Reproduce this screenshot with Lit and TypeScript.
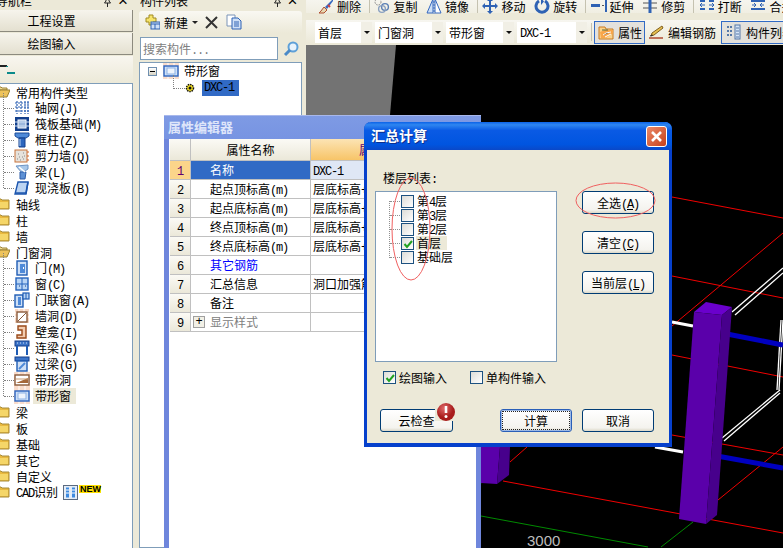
import { LitElement, css, html, svg } from "lit";
import { customElement } from "lit/decorators.js";

const shared = css`
  * { box-sizing: border-box; }
  :host { font: 12px "Noto Sans CJK SC", sans-serif; color: #000; }
  .lat { font: 12px "Liberation Mono", monospace; letter-spacing: -1.2px; }
  svg { display: block; flex: none; }
`;

// latin runs go in a 6px-per-char font, like the bitmap font in the app
const t = (s: string) =>
  s.split(/([\x20-\x7e]+)/).map((p, i) => (i % 2 ? html`<span class="lat">${p}</span>` : p));

const ic = (body: unknown, w = 16, h = 16) =>
  html`<svg width=${w} height=${h} viewBox="0 0 ${w} ${h}">${body}</svg>`;

const folderOpen = svg`<path d="M1 3h5l1 1h5v2H5L2 13H1z" fill="#f0dc9a" stroke="#9a8030"/><path d="M5 6h10l-3 7H2z" fill="#eec35a" stroke="#9a8030"/>`;
const folderShut = svg`<path d="M1 3h5l1 1h7v9H1z" fill="#e9b93f" stroke="#a58a3a"/><path d="M2 6h11v6H2z" fill="#f5d668"/>`;

const treeIcons: Record<string, unknown> = {
  grid: svg`<path d="M1 3h14M1 7h14M1 11h14M3 1v13M7 1v13M11 1v13M14 1v13" stroke="#2f62b4" stroke-width="1.2" stroke-dasharray="2 1" fill="none"/>`,
  raft: svg`<rect x="1" y="1" width="14" height="14" fill="#123f8c"/><rect x="4" y="4" width="8" height="8" fill="#9db8de" stroke="#fff"/><path d="M1 6h14M1 10h14" stroke="#cfe0f5"/>`,
  column: svg`<path d="M1 1h14v3l-3 2H4L1 4z" fill="#4f8ad8" stroke="#1c4d9a"/><path d="M5 6h6v9H5z" fill="#2c66be" stroke="#123f8c"/><path d="M6 7v7" stroke="#bcd6f4"/>`,
  wall: svg`<rect x="1" y="2" width="12" height="12" fill="#e6e2dc" stroke="#c8733a"/><path d="M3 11h1M6 12h1M9 11h1M5 9h1M8 9h1M10 8h1M4 6h1M9 5h1" stroke="#888"/><path d="M13 4h2M13 8h2M13 12h2" stroke="#d0642a"/>`,
  beam: svg`<path d="M2 2l12-1v4L8 9z" fill="#a8c8ea" stroke="#6d94c4"/><path d="M6 8h6l-1 7H6z" fill="#5c90d4" stroke="#2c5ca8"/><path d="M5 3l6 5" stroke="#fff" stroke-width="1.5"/>`,
  slab: svg`<path d="M4 2h10l-2 12H1z" fill="#bcd4f2" stroke="#1c55ae" stroke-width="1.4"/><path d="M2 13h10l2-11" stroke="#1c55ae" stroke-width="1.6" fill="none"/>`,
  door: svg`<rect x="3" y="1" width="10" height="14" fill="#cfe0f6" stroke="#1f5cb4" stroke-width="1.4"/><rect x="6" y="4" width="5" height="9" fill="#4f8ad8"/><rect x="9" y="7" width="1" height="2" fill="#fff"/>`,
  win: svg`<rect x="2" y="2" width="12" height="12" fill="#b9d5f5" stroke="#2563bc" stroke-width="1.4"/><path d="M8 2v12M2 8h12" stroke="#2563bc"/><path d="M5 10h1M11 10h1" stroke="#12408a"/>`,
  doorwin: svg`<rect x="1" y="3" width="8" height="12" fill="#cfe0f6" stroke="#1f5cb4" stroke-width="1.4"/><rect x="4" y="5" width="3" height="8" fill="#4f8ad8"/><rect x="9" y="1" width="6" height="6" fill="#b9d5f5" stroke="#1f5cb4" stroke-width="1.2"/><path d="M12 1v6" stroke="#1f5cb4"/>`,
  hole: svg`<rect x="1" y="1" width="14" height="14" fill="#f6d6c2"/><path d="M1 5h14M1 9h14M5 1v14M10 1v14" stroke="#fff"/><rect x="3" y="4" width="10" height="10" fill="#fff" stroke="#8a5a3a" stroke-width="1.4"/><path d="M4 13l8-8" stroke="#8a5a3a"/>`,
  niche: svg`<path d="M4 2h8v12H3v-3h5V6H4z" fill="#f3cdb0" stroke="#9a4a1a" stroke-width="1.4"/>`,
  lintelA: svg`<rect x="1" y="1" width="14" height="5" fill="#3c74c8" stroke="#143f8c"/><path d="M3 3h1M6 3h1M9 3h1M12 3h1" stroke="#cfe0f6"/><path d="M3 6v9M13 6v9" stroke="#1f5cb4" stroke-width="2"/>`,
  lintelB: svg`<rect x="1" y="1" width="14" height="4" fill="#3c74c8" stroke="#143f8c"/><rect x="3" y="5" width="10" height="10" fill="#cfe0f6" stroke="#1f5cb4" stroke-width="1.4"/><path d="M5 13l6-6" stroke="#4f8ad8" stroke-width="2"/>`,
  strip: svg`<rect x="0" y="0" width="16" height="16" fill="#f9dccb"/><path d="M0 4h16M0 12h16M5 0v16M11 0v16" stroke="#fff"/><rect x="1" y="3" width="14" height="10" fill="#fff" stroke="#8a5a3a" stroke-width="1.4"/><path d="M2 11l12-5v5z" fill="#a5683a"/><path d="M2 7h12" stroke="#c99a70"/>`,
  stripWin: svg`<rect x="0" y="0" width="16" height="16" fill="#f9dccb"/><path d="M0 4h16M0 12h16M5 0v16M11 0v16" stroke="#fff"/><rect x="1" y="3" width="14" height="10" fill="#cfe0f6" stroke="#2c64c0" stroke-width="1.4"/><rect x="4" y="5" width="8" height="6" fill="#eef4fc" stroke="#8db2e6"/>`,
};

const toolIcons: Record<string, unknown> = {
  erase: svg`<path d="M15 1L7 9l2 2 6-8z" fill="#3568c0"/><path d="M6 9l3 3-3 3H1l2-2z" fill="#e6d7b0" stroke="#b05030"/><path d="M10 7l2 2" stroke="#d04040" stroke-width="2"/>`,
  copy: svg`<circle cx="4" cy="4" r="3" fill="none" stroke="#888" stroke-dasharray="1.5 1"/><circle cx="11" cy="9" r="3.4" fill="none" stroke="#5a7fb4" stroke-width="1.4"/><circle cx="8" cy="11" r="3.4" fill="none" stroke="#8aa0c0" stroke-width="1.4"/>`,
  mirror: svg`<path d="M7 1v14H1z" fill="#cfe0f6" stroke="#3568c0"/><path d="M9 1v14h6z" fill="#fff" stroke="#3568c0"/><path d="M8 0v16" stroke="#3568c0" stroke-dasharray="2 1"/>`,
  move: svg`<path d="M8 0l3 3H9v4h4V5l3 3-3 3V9H9v4h2l-3 3-3-3h2V9H3v2L0 8l3-3v2h4V3H5z" fill="#2f62b4"/>`,
  rotate: svg`<path d="M11 3a6 6 0 1 1-6 0" fill="none" stroke="#2f62b4" stroke-width="3"/><path d="M7 0v7l3-3.500z" fill="#2f62b4"/>`,
  extend: svg`<rect x="0" y="6" width="9" height="3" fill="#2f62b4"/><path d="M11 7.500h2" stroke="#555"/><path d="M15 2v12" stroke="#2f62b4" stroke-width="2"/>`,
  trim: svg`<path d="M1 5h14M1 10h14" stroke="#555"/><path d="M8 1v14" stroke="#2f62b4" stroke-width="3"/>`,
  cut: svg`<path d="M1 3h5M10 3h5M1 11h5M10 11h5" stroke="#2f62b4" stroke-width="2"/><path d="M6 7H2M10 7h4" stroke="#2f62b4"/><path d="M3 5L1 7l2 2M13 5l2 2-2 2" stroke="#2f62b4" fill="none"/>`,
  merge: svg`<path d="M1 3h14M1 11h14" stroke="#2f62b4" stroke-width="2"/><path d="M2 7h4M10 7h4" stroke="#2f62b4"/><path d="M4 5l2 2-2 2M12 5l-2 2 2 2" stroke="#2f62b4" fill="none"/>`,
  attr: svg`<path d="M1 3h6l1 2h7v10H1z" fill="#fbd28a" stroke="#c97a20"/><path d="M2 8l5-2h8v3l-7 5H3z" fill="#f8a64a"/><path d="M5 11l3-2 5-1M7 13l6-3" stroke="#fff"/><path d="M4 6h6" stroke="#5a6a3a"/>`,
  rebar: svg`<path d="M14 2l1 2-9 7-3 1 1-3z" fill="#e8c050" stroke="#806020"/><path d="M1 14h14" stroke="#b04a30" stroke-width="1.5"/><path d="M2 12l3-1" stroke="#333"/>`,
  list: svg`<rect x="10" y="1" width="5" height="14" fill="#d6e4f6" stroke="#5678a8"/><path d="M11 4h3M11 7h3M11 10h3M11 13h3" stroke="#5678a8"/><path d="M2 3h5M2 7h5M2 11h5" stroke="#5678a8" stroke-width="2" stroke-dasharray="2 1"/>`,
  plus: svg`<path d="M5 1h4v3h3v4H9v3H5V8H2V4h3z" fill="#f6e46a" stroke="#a08a20"/><rect x="7" y="8" width="9" height="7" fill="#cfe0f6" stroke="#2f62b4"/><path d="M7 10h9M11 10v5" stroke="#2f62b4"/>`,
  del: svg`<path d="M2 2l11 11M13 2L2 13" stroke="#333" stroke-width="2"/>`,
  clone: svg`<path d="M1 1h8v11H1z" fill="#fff" stroke="#7a94b8"/><path d="M6 4h6l3 3v8H6z" fill="#cfe0f6" stroke="#2f62b4"/><path d="M8 8h5M8 10h5M8 12h5" stroke="#2f62b4"/>`,
  search: svg`<circle cx="10" cy="6" r="4.500" fill="#e8f3fc" stroke="#5ea0d8" stroke-width="2"/><path d="M7 9l-5 5" stroke="#4a8ac8" stroke-width="3"/>`,
  gear: svg`<circle cx="5" cy="5" r="3.500" fill="#f4e020" stroke="#111" stroke-width="1.500" stroke-dasharray="1.500 0.800"/><circle cx="5" cy="5" r="1.500" fill="#111"/>`,
};

const pin = svg`<path d="M3 0h5M4 0v4L2.500 6h6L7 4V0M5.500 6v4" fill="none" stroke="#222"/>`;

const titleBar = (name: string) => html`
  <div class="title">
    <span>${name}</span>
    <span class="pin">${ic(pin, 11, 10)}</span>
    <span class="close">×</span>
  </div>
`;

const titleCss = css`
  .title { height: 7px; overflow: hidden; display: flex; align-items: flex-end; position: relative; }
  .title span:first-child { flex: 1; line-height: 12px; white-space: nowrap; }
  .pin { margin-bottom: 0; }
  .close { font: 17px/12px "Liberation Sans", sans-serif; width: 19px; text-align: center; }
`;

type NavItem = { label: string; icon?: string; kids?: { label: string; icon: string; on?: boolean }[]; open?: boolean };

const navItems: NavItem[] = [
  {
    label: "常用构件类型",
    open: true,
    kids: [
      { label: "轴网(J)", icon: "grid" },
      { label: "筏板基础(M)", icon: "raft" },
      { label: "框柱(Z)", icon: "column" },
      { label: "剪力墙(Q)", icon: "wall" },
      { label: "梁(L)", icon: "beam" },
      { label: "现浇板(B)", icon: "slab" },
    ],
  },
  { label: "轴线" },
  { label: "柱" },
  { label: "墙" },
  {
    label: "门窗洞",
    open: true,
    kids: [
      { label: "门(M)", icon: "door" },
      { label: "窗(C)", icon: "win" },
      { label: "门联窗(A)", icon: "doorwin" },
      { label: "墙洞(D)", icon: "hole" },
      { label: "壁龛(I)", icon: "niche" },
      { label: "连梁(G)", icon: "lintelA" },
      { label: "过梁(G)", icon: "lintelB" },
      { label: "带形洞", icon: "strip" },
      { label: "带形窗", icon: "stripWin", on: true },
    ],
  },
  { label: "梁" },
  { label: "板" },
  { label: "基础" },
  { label: "其它" },
  { label: "自定义" },
];

@customElement("nav-panel")
class NavPanel extends LitElement {
  static styles = [
    shared,
    titleCss,
    css`
      :host { display: block; width: 139px; height: 548px; background: #ece9d8; margin-right: 0; }
      .title { margin-left: -4px; width: 137px; }
      .title .close { width: 20px; margin-right: 0; }
      .stack { margin-top: 3px; width: 133px; }
      .big {
        height: 22px;
        padding-right: 29px;
        display: flex;
        align-items: center;
        justify-content: center;
        background: linear-gradient(#f6f4ec, #e4e0d0);
        border-right: 1px solid #8c8a7e;
        border-bottom: 1px solid #8c8a7e;
        margin-bottom: 1px;
      }
      .tools {
        width: 133px;
        height: 27px;
        background: linear-gradient(#f8f6ef, #ece9d8);
        padding-top: 9px;
      }
      .tree {
        width: 133px;
        height: 466px;
        padding-top: 0;
        background: #fff;
        border-top: 1px solid #7f9db9;
        border-right: 1px solid #7f9db9;
        overflow: hidden;
      }
      .row { display: flex; align-items: center; height: 16px; white-space: nowrap; }
      .group > svg { margin-left: -5px; margin-right: 6px; }
      .kids { position: relative; }
      .kids::before {
        content: "";
        position: absolute;
        left: 3px;
        top: -7px;
        bottom: 8px;
        border-left: 1px dotted #808080;
      }
      .kid { padding-left: 14px; position: relative; }
      .kid::before {
        content: "";
        position: absolute;
        left: 4px;
        width: 10px;
        top: 8px;
        border-top: 1px dotted #808080;
      }
      .kid span.lbl { margin-left: 3px; padding: 0 2px 0 2px; height: 16px; line-height: 16px; }
      .kid .on { background: #ece9d8; width: 43px; }
      .cad-ic { margin-left: 5px; margin-right: 1px; }
      .new {
        font: bold 9px/8px "Liberation Sans", sans-serif;
        background: #ffe000;
        padding: 0 1px;
        width: 22px;
        height: 8px;
        align-self: flex-start;
        margin-top: 1px;
      }
    `,
  ];

  render() {
    return html`
      ${titleBar("导航栏")}
      <div class="stack">
        <div class="big">工程设置</div>
        <div class="big">绘图输入</div>
      </div>
      <div class="tools">
        ${ic(svg`<path d="M-1 1h8" stroke="#222" stroke-width="2"/><path d="M7 8h8" stroke="#0a8a8a" stroke-width="2"/><path d="M7 1v1" stroke="#0a8a8a" stroke-width="2"/>`)}
      </div>
      <div class="tree">
        ${navItems.map(
          (g) => html`
            <div class="row group">${ic(g.open ? folderOpen : folderShut, 15, 16)}<span>${t(g.label)}</span></div>
            ${g.kids
              ? html`<div class="kids">
                  ${g.kids.map(
                    (k) => html`<div class="row kid">
                      ${ic(treeIcons[k.icon])}
                      <span class="lbl ${k.on ? "on" : ""}">${t(k.label)}</span>
                    </div>`,
                  )}
                </div>`
              : ""}
          `,
        )}
        <div class="row group">
          ${ic(folderShut, 15, 16)}<span>${t("CAD识别")}</span>
          <span class="cad-ic">${ic(svg`<rect x="0.500" y="0.500" width="14" height="14" fill="#e4ecf6" stroke="#5a6a80"/><path d="M3 2.500h3v10H3zM9 2.500h3v10H9z" fill="#3d8ae0"/><path d="M3 5h3M3 8h3M9 5h3M9 8h3" stroke="#fff"/>`, 15, 15)}</span>
          <span class="new">NEW</span>
        </div>
      </div>
    `;
  }
}

@customElement("list-panel")
class ListPanel extends LitElement {
  static styles = [
    shared,
    titleCss,
    css`
      :host { display: block; width: 163px; height: 548px; background: #ece9d8; }
      .title { margin-left: 1px; width: 162px; }
      .tools {
        margin-top: 4px;
        height: 22px;
        display: flex;
        align-items: center;
        background: linear-gradient(#f9f8f2, #ece9d8);
        padding-left: 5px;
        border-radius: 3px 3px 0 0;
      }
      .tools .txt { margin-left: 4px; width: 24px; }
      .arrow { width: 0; height: 0; border: 3px solid transparent; border-top: 3px solid #222; border-bottom: 0; margin: 0 6px 0 4px; }
      .tools .del { margin-right: 7px; }
      .search { margin-top: 4px; height: 23px; display: flex; align-items: center; padding-left: 1px; }
      .box {
        width: 138px;
        height: 23px;
        border: 1px solid #7f9db9;
        background: #fff;
        color: #808080;
        padding: 0 2px;
        line-height: 21px;
      }
      .go { margin-left: 5px; }
      .tree {
        margin-top: 2px;
        height: 486px;
        background: #fff;
        border: 1px solid #7f9db9;
        padding: 1px 0 0 8px;
      }
      .row { display: flex; align-items: center; height: 16px; white-space: nowrap; position: relative; }
      .minus {
        width: 9px;
        height: 9px;
        border: 1px solid #6f8fb0;
        background: linear-gradient(#fff, #d8d4c4);
        position: relative;
        margin-right: 6px;
      }
      .minus::after { content: ""; position: absolute; left: 1px; right: 1px; top: 3px; border-top: 1px solid #000; }
      .row .name { margin-left: 5px; line-height: 14px; }
      .child { padding-left: 37px; margin-top: 2px; }
      .child::before {
        content: "";
        position: absolute;
        left: 25px;
        top: -5px;
        width: 11px;
        height: 13px;
        border-left: 1px dotted #808080;
        border-bottom: 1px dotted #808080;
      }
      .sel {
        margin-left: 6px;
        width: 37px;
        height: 16px;
        line-height: 16px;
        padding-left: 2px;
        background: #316ac5;
      }
    `,
  ];

  render() {
    return html`
      ${titleBar("构件列表")}
      <div class="tools">
        ${ic(toolIcons.plus)}
        <span class="txt">新建</span>
        <span class="arrow"></span>
        <span class="del">${ic(toolIcons.del, 15, 15)}</span>
        ${ic(toolIcons.clone)}
      </div>
      <div class="search">
        <div class="box">${t("搜索构件...")}</div>
        <span class="go">${ic(toolIcons.search)}</span>
      </div>
      <div class="tree">
        <div class="row" style="height:14px">
          <span class="minus"></span>
          ${ic(treeIcons.stripWin)}
          <span class="name">带形窗</span>
        </div>
        <div class="row child">
          ${ic(toolIcons.gear, 11, 11)}
          <span class="sel lat">DXC-1</span>
        </div>
      </div>
    `;
  }
}

const row1 = [
  ["erase", "删除", true],
  ["copy", "复制", false],
  ["mirror", "镜像", true],
  ["move", "移动", false],
  ["rotate", "旋转", true],
  ["extend", "延伸", false],
  ["trim", "修剪", true],
  ["cut", "打断", false],
  ["merge", "合并", false],
] as [string, string, boolean][];

const combos = [
  ["首层", 57],
  ["门窗洞", 68],
  ["带形窗", 68],
  ["DXC-1", 70],
] as [string, number][];

@customElement("tool-bars")
class ToolBars extends LitElement {
  static styles = [
    shared,
    css`
      :host { display: block; height: 45px; background: #ece9d8; overflow: hidden; }
      .row1 {
        height: 13px;
        display: flex;
        align-items: flex-end;
        gap: 8.7px;
        padding-left: 12px;
        background: linear-gradient(#f6f5ee, #f0eee2);
        white-space: nowrap;
      }
      .item { display: flex; align-items: flex-end; gap: 3px; line-height: 13px; height: 13px; flex: none; }
      .item svg { margin-bottom: -1px; }
      .sep { width: 1px; height: 13px; background: #c5c2b0; margin: 0 -4px 0 -1px; flex: none; }
      .row2 {
        margin-top: 7px;
        height: 24px;
        display: flex;
        align-items: center;
        padding-left: 9px;
        background: linear-gradient(#f7f6f0, #ece9d8);
        white-space: nowrap;
      }
      .combo {
        height: 21px;
        margin-right: 3px;
        background: #fff;
        display: flex;
        align-items: center;
        padding-left: 3px;
        flex: none;
      }
      .combo .val { flex: 1; }
      .combo .drop {
        width: 11px;
        height: 21px;
        background: #f1efe5;
        position: relative;
      }
      .combo .drop::after {
        content: "";
        position: absolute;
        left: 3px;
        top: 9px;
        border: 3px solid transparent;
        border-top: 3px solid #111;
        border-bottom: 0;
      }
      .rule { width: 1px; height: 18px; background: #c5c2b0; margin: 0 2px 0 1px; flex: none; }
      .btn {
        height: 23px;
        border: 1px solid #316ac5;
        background: #e3e1dc;
        display: flex;
        align-items: center;
        gap: 4px;
        padding-left: 3px;
        flex: none;
      }
      .plain { display: flex; align-items: center; gap: 4px; margin: 0 4px 0 3px; flex: none; }
      .wide { gap: 5px; margin-left: 1px; }
    `,
  ];

  render() {
    return html`
      <div class="row1">
        ${row1.map(
          ([icon, label, sep]) => html`
            <div class="item">${ic(toolIcons[icon])}<span>${label}</span></div>
            ${sep ? html`<span class="sep"></span>` : ""}
          `,
        )}
      </div>
      <div class="row2">
        ${combos.map(
          ([label, w]) => html`
            <div class="combo" style="width:${w}px">
              <span class="val">${t(label)}</span><span class="drop"></span>
            </div>
          `,
        )}
        <span class="rule"></span>
        <div class="btn" style="width:51px">${ic(toolIcons.attr)}<span>属性</span></div>
        <div class="plain">${ic(toolIcons.rebar)}<span>编辑钢筋</span></div>
        <div class="btn wide" style="width:80px">${ic(toolIcons.list)}<span>构件列表</span></div>
      </div>
    `;
  }
}

const redLines = [
  [672, 197, 783, 218],
  [672, 276, 783, 298],
  [672, 355, 783, 377],
  [672, 435, 783, 455],
  [672, 326, 783, 233],
  [718, 500, 783, 447],
  [503, 481, 783, 533],
  [510, 462, 527, 447],
];
const greenLines = [
  [481, 516, 648, 547],
  [661, 547, 693, 522],
  [481, 483, 485, 481],
];
const whiteLines = [
  [732, 312, 783, 268],
  [735, 315, 783, 273],
  [722, 438, 780, 390],
  [724, 441, 780, 393],
  [783, 320, 779, 390],
  [781, 320, 777, 390],
];

@customElement("cad-view")
class CadView extends LitElement {
  static styles = [
    shared,
    css`
      :host { display: block; height: 503px; background: #000; overflow: hidden; }
      text { font: 15px "Liberation Sans", sans-serif; fill: #bdbdbd; }
    `,
  ];

  render() {
    const seg = (list: number[][], color: string, w: number) =>
      list.map(
        ([a, b, c, d]) =>
          svg`<line x1=${a} y1=${b} x2=${c} y2=${d} stroke=${color} stroke-width=${w} />`,
      );
    return html`
      <svg width="477" height="503" viewBox="306 45 477 503">
        <path d="M306 45h90l-6 70h-84z" fill="#737373" />
        ${seg(redLines, "#f00000", 1)} ${seg(greenLines, "#008a00", 1)} ${seg(whiteLines, "#fff", 1.3)}
        ${seg([[672, 322, 693, 326], [655, 447, 683, 452]], "#fff", 3)}
        ${seg([[727, 334, 783, 345], [717, 456, 783, 468]], "#0000c0", 5)}
        <path d="M481 447v36l16 1 3-37z" fill="#5a00aa" />
        <path d="M500 447h10l-1 28-12 9z" fill="#47008c" />
        <path d="M694 312l12-10 26 5-10 8z" fill="#6a00cc" />
        <path d="M694 312l-15 207 27 5 16-209z" fill="#5a00aa" />
        <path d="M722 315l10-8-15 208-11 9z" fill="#47008c" />
        <text x="527" y="546">3000</text>
      </svg>
    `;
  }
}

const propRows = [
  ["名称", "DXC-1"],
  ["起点顶标高(m)", "层底标高+洞口高度"],
  ["起点底标高(m)", "层底标高+洞口高度"],
  ["终点顶标高(m)", "层底标高+洞口高度"],
  ["终点底标高(m)", "层底标高+洞口高度"],
  ["其它钢筋", ""],
  ["汇总信息", "洞口加强筋"],
  ["备注", ""],
  ["显示样式", ""],
];

@customElement("prop-editor")
class PropEditor extends LitElement {
  static styles = [
    shared,
    css`
      :host {
        position: absolute;
        left: 164px;
        top: 115px;
        width: 317px;
        height: 433px;
        background: #fff;
        border-left: 5px solid #6f86dc;
        border-right: 5px solid #6f86dc;
      }
      .cap {
        height: 24px;
        margin: 0 -5px;
        padding-left: 4px;
        border-top: 1px solid #a8b8ec;
        background: linear-gradient(#7e9ae4, #7794e2);
        color: #dfe6fa;
        font-weight: bold;
        font-size: 13px;
        line-height: 22px;
      }
      .grid { display: grid; grid-template-columns: 21px 120px 165px; margin-left: 1px; white-space: nowrap; }
      .grid > div { height: 19px; border-bottom: 1px solid #c0c0c0; border-right: 1px solid #c0c0c0; line-height: 18px; overflow: hidden; }
      .grid .head {
        height: 22px;
        line-height: 21px;
        background: linear-gradient(#fbfaf5, #ebe8d9);
        text-align: center;
      }
      .grid .head.hot { background: linear-gradient(#fce4b4, #f7c468); text-align: left; padding-left: 48px; color: #600070; }
      .num { background: linear-gradient(#fbfaf5, #ebe8d9); text-align: center; }
      .num.hot { background: #fbd58a; color: #600070; }
      .name { padding-left: 19px; }
      .name.sel { background: #316ac5; color: #fff; }
      .name.link { color: #0000ff; }
      .name.dim { color: #808080; padding-left: 2px; display: flex; align-items: center; gap: 5px; }
      .val { padding-left: 2px; }
      .val.sel { background: #dfe7f5; }
      .plus {
        width: 12px;
        height: 12px;
        border: 1px solid #a0a0a0;
        background: #f2f0e6;
        color: #000;
        font: 12px/10px "Liberation Mono", monospace;
        text-align: center;
      }
    `,
  ];

  render() {
    return html`
      <div class="cap">属性编辑器</div>
      <div class="grid">
        <div class="head"></div>
        <div class="head">属性名称</div>
        <div class="head hot">属性值</div>
        ${propRows.map(([name, val], i) => {
          const cls = i === 0 ? "sel" : i === 5 ? "link" : i === 8 ? "dim" : "";
          return html`
            <div class="num ${i === 0 ? "hot" : ""}"><span class="lat">${i + 1}</span></div>
            <div class="name ${cls}">
              ${i === 8 ? html`<span class="plus">+</span>` : ""}<span>${t(name)}</span>
            </div>
            <div class="val ${i === 0 ? "sel" : ""}">${t(val)}</div>
          `;
        })}
      </div>
    `;
  }
}

const floors: [string, boolean][] = [
  ["第4层", false],
  ["第3层", false],
  ["第2层", false],
  ["首层", true],
  ["基础层", false],
];

const tick = svg`<path d="M2.500 6l2.500 3 5-6" fill="none" stroke="#21a121" stroke-width="2"/>`;

const check = (on: boolean) =>
  html`<span class="check">${on ? ic(tick, 11, 11) : ""}</span>`;

@customElement("sum-dialog")
class SumDialog extends LitElement {
  static styles = [
    shared,
    css`
      :host {
        position: absolute;
        left: 364px;
        top: 122px;
        width: 308px;
        height: 325px;
        background: #ece9d8;
        border: solid #0640cc;
        border-width: 0 3px 4px 3px;
        border-radius: 7px 7px 0 0;
      }
      .cap {
        height: 28px;
        margin: 0 -3px;
        border-radius: 7px 7px 0 0;
        background: linear-gradient(#0a62e8 0%, #2f86f0 10%, #0a5ae4 30%, #0055e0 80%, #0a48c8 100%);
        color: #fff;
        font-weight: bold;
        font-size: 14px;
        line-height: 27px;
        padding-left: 7px;
        text-shadow: 1px 1px #0a2f90;
        display: flex;
        justify-content: space-between;
      }
      .x {
        margin: 4px 5px 0 0;
        width: 21px;
        height: 21px;
        border: 1px solid #fff;
        border-radius: 3px;
        background: linear-gradient(135deg, #ea8a6a, #c8401a);
      }
      .top { display: flex; padding-left: 8px; }
      .label { margin: 20px 0 5px 8px; height: 16px; line-height: 16px; }
      .listbox {
        width: 182px;
        height: 171px;
        border: 1px solid #7f9db9;
        background: #fff;
        padding: 2px 0 0 25px;
        position: relative;
      }
      .listbox::before {
        content: "";
        position: absolute;
        left: 13px;
        top: 9px;
        height: 57px;
        width: 3px;
        border-left: 1px dotted #909090;
      }
      .floor { display: flex; align-items: center; height: 14px; position: relative; }
      .floor::before { content: ""; position: absolute; left: -11px; width: 10px; top: 7px; border-top: 1px dotted #909090; }
      .floor .nm { margin-left: 2px; padding: 0 1px; height: 14px; line-height: 14px; }
      .floor .nm.on { background: #ece9d8; width: 31px; }
      .check {
        display: block;
        width: 13px;
        height: 13px;
        flex: none;
        border: 1px solid #1c5180;
        background: linear-gradient(135deg, #dcdcd7, #fff);
      }
      .side { display: flex; flex-direction: column; gap: 17px; margin: 41px 0 0 25px; }
      button {
        width: 72px;
        height: 23px;
        padding: 0;
        font: inherit;
        color: #000;
        border: 1px solid #003c74;
        border-radius: 3px;
        background: linear-gradient(#fff, #f4f3ee 85%, #dcd8c8);
      }
      .opts { display: flex; align-items: center; height: 16px; margin: 7px 0 0 16px; }
      .opts .check { margin-right: 3px; }
      .opts .check.gap { margin-left: 23px; }
      .foot { display: flex; margin: 24px 0 0 13px; }
      .cloud { position: relative; margin-right: 47px; }
      .cloud button { width: 73px; }
      .alert { position: absolute; left: 55px; top: -7px; background: #ece9d8; width: 20px; height: 19px; }
      .ok { margin-right: 10px; border-color: #2a5fb8; box-shadow: inset 0 0 0 1px #9cb8e4; outline: 1px dotted #222; outline-offset: -3px; }
      .marks { position: absolute; left: -3px; top: 0; pointer-events: none; }
    `,
  ];

  render() {
    return html`
      <div class="cap">
        <span>汇总计算</span>
        <div class="x">
          ${ic(svg`<path d="M5 5l9 9M14 5l-9 9" stroke="#fff" stroke-width="2.600"/>`, 19, 19)}
        </div>
      </div>
      <div class="top">
        <div>
          <div class="label" style="margin-left:8px">${t("楼层列表:")}</div>
          <div class="listbox">
            ${floors.map(
              ([name, on]) => html`
                <div class="floor">${check(on)}<span class="nm ${on ? "on" : ""}">${t(name)}</span></div>
              `,
            )}
          </div>
        </div>
        <div class="side">
          <button>全选<span class="lat">(<u>A</u>)</span></button>
          <button>清空<span class="lat">(<u>C</u>)</span></button>
          <button>当前层<span class="lat">(<u>L</u>)</span></button>
        </div>
      </div>
      <div class="opts">
        ${check(true)}<span>绘图输入</span>
        <span class="check gap"></span><span>单构件输入</span>
      </div>
      <div class="foot">
        <div class="cloud">
          <button>云检查</button>
          <div class="alert">
            ${ic(svg`
              <defs><radialGradient id="r" cx="40%" cy="30%"><stop offset="0" stop-color="#e06a6a"/><stop offset="1" stop-color="#a81c1c"/></radialGradient></defs>
              <circle cx="11" cy="10" r="9" fill="url(#r)"/>
              <path d="M11 4v7" stroke="#fff" stroke-width="2.600"/><circle cx="11" cy="14.500" r="1.500" fill="#fff"/>
            `, 20, 19)}
          </div>
        </div>
        <button class="ok">计算</button>
        <button>取消</button>
      </div>
      <svg class="marks" width="308" height="325" viewBox="364 122 308 325">
        <ellipse cx="411" cy="229" rx="19" ry="51" fill="none" stroke="#f06060" />
        <ellipse cx="615.500" cy="200.500" rx="39.500" ry="17.500" fill="none" stroke="#f06060" />
      </svg>
    `;
  }
}

@customElement("app-root")
export class AppRoot extends LitElement {
  static styles = [
    shared,
    css`
      :host { display: block; width: 783px; height: 548px; position: relative; overflow: hidden; background: #ece9d8; }
      .shell { display: flex; height: 548px; }
      .main { width: 477px; margin-left: 4px; }
    `,
  ];

  render() {
    return html`
      <div class="shell">
        <nav-panel></nav-panel>
        <list-panel></list-panel>
        <div class="main">
          <tool-bars></tool-bars>
          <cad-view></cad-view>
        </div>
      </div>
      <prop-editor></prop-editor>
      <sum-dialog></sum-dialog>
    `;
  }
}

export { NavPanel, ListPanel, ToolBars, CadView, PropEditor, SumDialog };
